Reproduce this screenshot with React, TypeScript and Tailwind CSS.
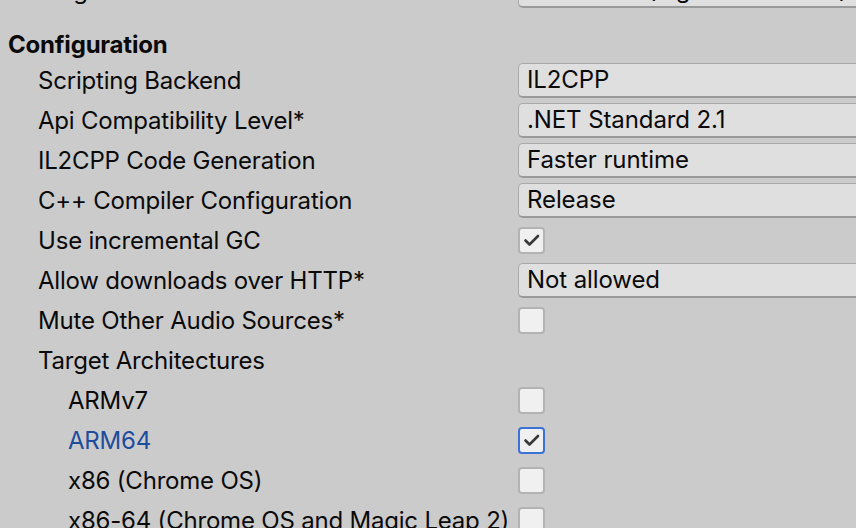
import React from 'react';

type Row =
  | { kind: 'select'; label: string; value: string; indent?: boolean }
  | { kind: 'check'; label: string; checked: boolean; indent?: boolean; focused?: boolean }
  | { kind: 'label'; label: string };

const rows: Row[] = [
  { kind: 'select', label: 'Scripting Backend', value: 'IL2CPP' },
  { kind: 'select', label: 'Api Compatibility Level*', value: '.NET Standard 2.1' },
  { kind: 'select', label: 'IL2CPP Code Generation', value: 'Faster runtime' },
  { kind: 'select', label: 'C++ Compiler Configuration', value: 'Release' },
  { kind: 'check', label: 'Use incremental GC', checked: true },
  { kind: 'select', label: 'Allow downloads over HTTP*', value: 'Not allowed' },
  { kind: 'check', label: 'Mute Other Audio Sources*', checked: false },
  { kind: 'label', label: 'Target Architectures' },
  { kind: 'check', label: 'ARMv7', checked: false, indent: true },
  { kind: 'check', label: 'ARM64', checked: true, indent: true, focused: true },
  { kind: 'check', label: 'x86 (Chrome OS)', checked: false, indent: true },
  { kind: 'check', label: 'x86-64 (Chrome OS and Magic Leap 2)', checked: false, indent: true },
];

const Check = () => (
  <svg width="20" height="20" viewBox="0 0 20 20" fill="none">
    <path d="M3.5 10.5 L7.5 14.5 L16 6" stroke="#383838" strokeWidth="2.6" strokeLinecap="round" strokeLinejoin="round" />
  </svg>
);

const SelectBox = ({ value }: { value: string }) => (
  <div className="w-[420px] h-[35px] shrink-0 flex items-center pl-[8px] pt-[1px] bg-[#dfdfdf] border border-[#a9a9a9] border-b-2 border-b-[#999999] rounded-[5px] text-[24px] tracking-[-0.1px] text-[#0a0a0a] whitespace-nowrap overflow-hidden">
    {value}
  </div>
);

const CheckBox = ({ checked, focused }: { checked: boolean; focused?: boolean }) => (
  <div
    className={`w-[27px] h-[27px] rounded-[4px] flex items-center justify-center bg-[#f0f0f0] ${
      focused ? 'border-2 border-[#3a72d6]' : 'border-2 border-[#b3b3b3]'
    }`}
  >
    {checked && <Check />}
  </div>
);

export default function App() {
  return (
    <div
      className="w-[856px] h-[528px] overflow-hidden bg-[#cbcbcb] text-[#0a0a0a]"
      style={{ fontFamily: 'Inter, "Noto Sans", sans-serif' }}
    >
      <div className="-mt-[30px] flex flex-col">
        <div className="h-[40px] flex items-center">
          <div className="w-[518px] shrink-0 pl-[38px] pt-[1px] text-[24px] tracking-[-0.2px]">Target API Level</div>
          <SelectBox value="Automatic (highest installed)" />
        </div>

        <div className="h-[50px] pt-[19px] flex items-center pl-[8px] text-[24px] font-bold tracking-[-0.2px]">
          Configuration
        </div>

        {rows.map((row, i) => (
          <div key={i} className="h-[40px] flex items-center">
            <div
              className={`w-[518px] shrink-0 pt-[1px] text-[24px] tracking-[-0.2px] whitespace-nowrap ${row.kind !== 'label' && row.indent ? 'pl-[68px]' : 'pl-[38px]'} ${
                row.kind === 'check' && row.focused ? 'text-[#1f4d9e]' : ''
              }`}
            >
              {row.label}
            </div>
            {row.kind === 'select' && <SelectBox value={row.value} />}
            {row.kind === 'check' && <CheckBox checked={row.checked} focused={row.focused} />}
          </div>
        ))}
      </div>
    </div>
  );
}
